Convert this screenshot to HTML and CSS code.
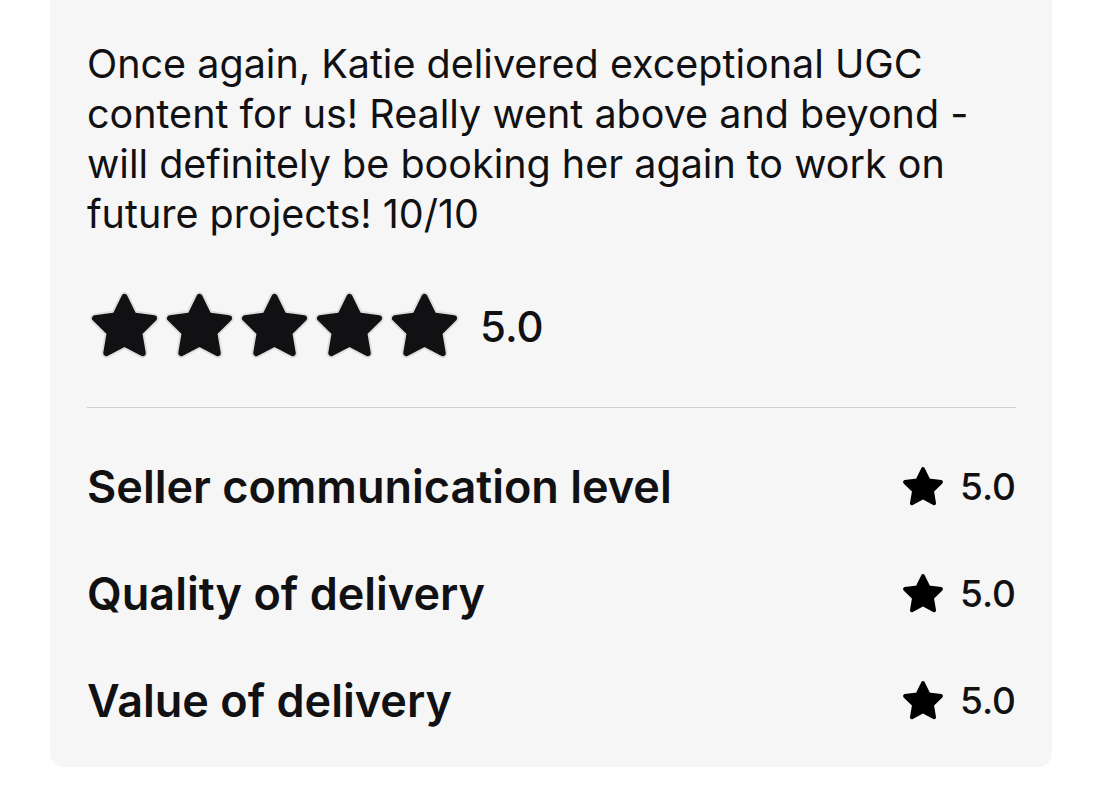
FILE: index.html
```html
<!DOCTYPE html>
<html lang="en">
<head>
<meta charset="utf-8">
<title>Review</title>
<link rel="stylesheet" href="styles.css">
</head>
<body>
<div class="card">
  <p class="review">Once again, Katie delivered exceptional UGC content for us! Really went above and beyond - will definitely be booking her again to work on future projects! 10/10</p>
  <div class="rating">
    <div class="stars">
      <svg class="big-star" viewBox="0 0 24 24"><use href="#star-big"/></svg>
      <svg class="big-star" viewBox="0 0 24 24"><use href="#star-big"/></svg>
      <svg class="big-star" viewBox="0 0 24 24"><use href="#star-big"/></svg>
      <svg class="big-star" viewBox="0 0 24 24"><use href="#star-big"/></svg>
      <svg class="big-star" viewBox="0 0 24 24"><use href="#star-big"/></svg>
    </div>
    <span class="score">5.0</span>
  </div>
  <div class="divider"></div>
  <div class="rows">
    <div class="row">
      <span class="label">Seller communication level</span>
      <span class="value"><svg class="small-star" viewBox="0 0 24 24"><use href="#star-small"/></svg>5.0</span>
    </div>
    <div class="row">
      <span class="label">Quality of delivery</span>
      <span class="value"><svg class="small-star" viewBox="0 0 24 24"><use href="#star-small"/></svg>5.0</span>
    </div>
    <div class="row">
      <span class="label">Value of delivery</span>
      <span class="value"><svg class="small-star" viewBox="0 0 24 24"><use href="#star-small"/></svg>5.0</span>
    </div>
  </div>
</div>
<svg class="defs" width="0" height="0">
  <defs>
    <g id="star-big">
      <polygon points="12,2.6 14.9,8.5 21.4,9.4 16.7,14 17.8,20.5 12,17.4 6.2,20.5 7.3,14 2.6,9.4 9.1,8.5" fill="#ddd" stroke="#ddd" stroke-width="3.2" stroke-linejoin="round"/>
      <polygon points="12,2.6 14.9,8.5 21.4,9.4 16.7,14 17.8,20.5 12,17.4 6.2,20.5 7.3,14 2.6,9.4 9.1,8.5" fill="#111113" stroke="#111113" stroke-width="2" stroke-linejoin="round"/>
    </g>
    <g id="star-small">
      <polygon points="12,2.6 14.9,8.5 21.4,9.4 16.7,14 17.8,20.5 12,17.4 6.2,20.5 7.3,14 2.6,9.4 9.1,8.5" fill="#000" stroke="#000" stroke-width="2" stroke-linejoin="round"/>
    </g>
  </defs>
</svg>
</body>
</html>
```

FILE: styles.css
```css
html, body {
  margin: 0;
  padding: 0;
  background: #ffffff;
}

body {
  font-family: Inter, "Noto Sans", "Liberation Sans", sans-serif;
  color: #111113;
}

.card {
  width: 1002px;
  margin: -20px 0 0 50px;
  box-sizing: border-box;
  padding: 59px 36px 13px 37px;
  background: #f6f6f6;
  border-radius: 0 0 14px 14px;
}

.review {
  margin: 0;
  font-size: 39.5px;
  line-height: 50px;
  font-weight: 400;
}

.rating {
  display: flex;
  align-items: center;
  gap: 18px;
  margin-top: 50px;
}

.stars {
  display: flex;
  gap: 0;
}

.big-star {
  width: 75px;
  height: 75px;
  display: block;
}

.score {
  font-size: 42px;
  font-weight: 500;
}

.divider {
  height: 1px;
  background: #cfcfcf;
  margin-top: 43px;
}

.rows {
  display: flex;
  flex-direction: column;
  padding-top: 25px;
}

.row {
  display: flex;
  justify-content: space-between;
  align-items: center;
  height: 107px;
}

.label {
  font-size: 45px;
  font-weight: 600;
}

.value {
  display: flex;
  align-items: center;
  gap: 14px;
  font-size: 37px;
  font-weight: 500;
}

.small-star {
  width: 46px;
  height: 46px;
  display: block;
}

.defs {
  position: absolute;
  width: 0;
  height: 0;
}
```
